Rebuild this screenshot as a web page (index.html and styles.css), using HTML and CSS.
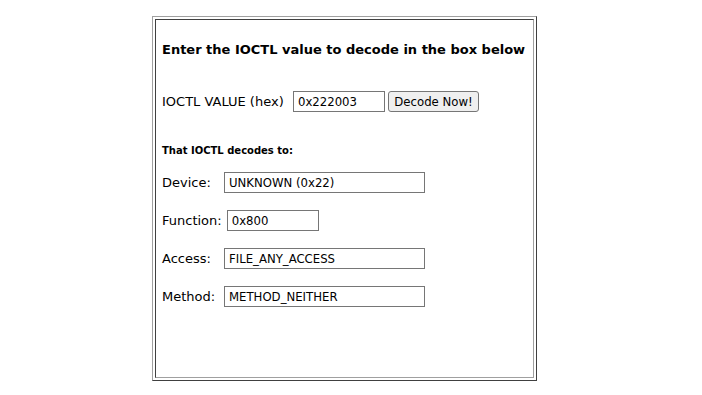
FILE: index.html
```html
<!DOCTYPE html>
<html lang="en">
<head>
  <meta charset="UTF-8">
  <title>IOCTL Decoder</title>
  <link rel="stylesheet" href="styles.css">
</head>
<body>
  <div class="panel">
    <div class="cell">
      <h3>Enter the IOCTL value to decode in the box below</h3>

      <form class="row" onsubmit="return false;">
        <label for="ioctl" class="main-label">IOCTL VALUE (hex)</label>
        <input type="text" id="ioctl" class="short" value="0x222003">
        <button type="submit">Decode Now!</button>
      </form>

      <h5>That IOCTL decodes to:</h5>

      <div class="row result">
        <label>Device:</label>
        <input type="text" class="long" value="UNKNOWN (0x22)" readonly>
      </div>
      <div class="row result">
        <label>Function:</label>
        <input type="text" class="short" value="0x800" readonly>
      </div>
      <div class="row result">
        <label>Access:</label>
        <input type="text" class="long" value="FILE_ANY_ACCESS" readonly>
      </div>
      <div class="row result">
        <label>Method:</label>
        <input type="text" class="long" value="METHOD_NEITHER" readonly>
      </div>
    </div>
  </div>
</body>
</html>
```

FILE: styles.css
```css
* {
  box-sizing: border-box;
}

body {
  margin: 0;
  padding: 16px 0 0 152px;
  background: #fff;
  color: #000;
  font-family: "DejaVu Sans", Verdana, sans-serif;
  font-size: 13px;
}

/* old-school table border look */
.panel {
  width: 385px;
  height: 365px;
  padding: 2px;
  border: 1px solid;
  border-color: #a0a0a0 #404040 #404040 #a0a0a0;
}

.cell {
  height: 100%;
  padding: 22px 6px 0 6px;
  border: 1px solid;
  border-color: #404040 #a0a0a0 #a0a0a0 #404040;
}

h3 {
  margin: 0;
  font-size: 13px;
  line-height: 16px;
  font-weight: bold;
}

h5 {
  margin: 33px 0 0 0;
  font-size: 10px;
  line-height: 12px;
  font-weight: bold;
}

.row {
  display: flex;
  align-items: center;
  gap: 5px;
  margin: 33px 0 0 0;
}

.main-label {
  width: 126px;
}

.row.result {
  margin-top: 17px;
}

.result:first-of-type {
  margin-top: 15px;
}

.result label {
  min-width: 57px;
}

input {
  height: 21px;
  padding: 1px 4px;
  border: 1px solid #767676;
  border-radius: 0;
  font-family: "DejaVu Sans Condensed", "DejaVu Sans", sans-serif;
  font-size: 13px;
  color: #000;
  background: #fff;
}

input.short {
  width: 92px;
}

input.long {
  width: 201px;
}

button {
  width: 91px;
  height: 21px;
  margin-left: -2px;
  padding: 0;
  border: 1px solid #767676;
  border-radius: 3px;
  background: #efefef;
  font-family: "DejaVu Sans Condensed", "DejaVu Sans", sans-serif;
  font-size: 13px;
  color: #000;
}
```
